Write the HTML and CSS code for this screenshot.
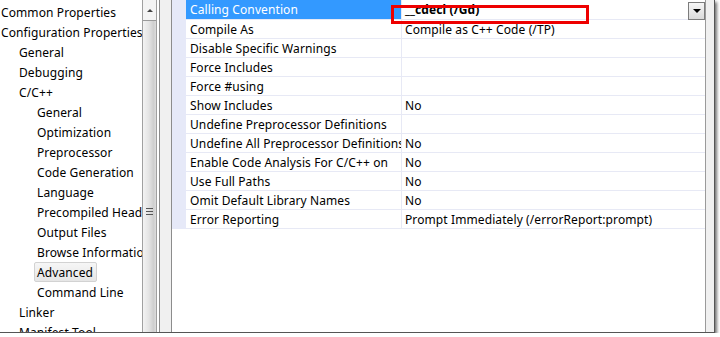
FILE: index.html
```html
<!DOCTYPE html>
<html>
<head>
  <meta charset="UTF-8">
  <title>Property Pages</title>
  <link rel="stylesheet" href="styles.css">
</head>
<body>
  <div class="window">
    <!-- 左侧树 -->
    <ul class="tree">
      <li class="lv0"><span>Common Properties</span></li>
      <li class="lv0"><span>Configuration Properties</span></li>
      <li class="lv1"><span>General</span></li>
      <li class="lv1"><span>Debugging</span></li>
      <li class="lv1"><span>C/C++</span></li>
      <li class="lv2"><span>General</span></li>
      <li class="lv2"><span>Optimization</span></li>
      <li class="lv2"><span>Preprocessor</span></li>
      <li class="lv2"><span>Code Generation</span></li>
      <li class="lv2"><span>Language</span></li>
      <li class="lv2"><span>Precompiled Headers</span></li>
      <li class="lv2"><span>Output Files</span></li>
      <li class="lv2"><span>Browse Information</span></li>
      <li class="lv2 selected"><span>Advanced</span></li>
      <li class="lv2"><span>Command Line</span></li>
      <li class="lv1"><span>Linker</span></li>
      <li class="lv1"><span>Manifest Tool</span></li>
    </ul>
    <div class="vscroll">
      <div class="up"></div>
      <div class="thumb"><span class="grip"></span></div>
    </div>
    <div class="splitter"></div>

    <!-- 属性表格 -->
    <div class="grid">
      <div class="gutter"></div>
      <div class="table">
        <div class="row active">
          <div class="name">Calling Convention</div>
          <div class="value bold">__cdecl (/Gd)<span class="drop"></span></div>
        </div>
        <div class="row"><div class="name">Compile As</div><div class="value">Compile as C++ Code (/TP)</div></div>
        <div class="row"><div class="name">Disable Specific Warnings</div><div class="value"></div></div>
        <div class="row"><div class="name">Force Includes</div><div class="value"></div></div>
        <div class="row"><div class="name">Force #using</div><div class="value"></div></div>
        <div class="row"><div class="name">Show Includes</div><div class="value">No</div></div>
        <div class="row"><div class="name">Undefine Preprocessor Definitions</div><div class="value"></div></div>
        <div class="row"><div class="name">Undefine All Preprocessor Definitions</div><div class="value">No</div></div>
        <div class="row"><div class="name">Enable Code Analysis For C/C++ on</div><div class="value">No</div></div>
        <div class="row"><div class="name">Use Full Paths</div><div class="value">No</div></div>
        <div class="row"><div class="name">Omit Default Library Names</div><div class="value">No</div></div>
        <div class="row"><div class="name">Error Reporting</div><div class="value">Prompt Immediately (/errorReport:prompt)</div></div>
      </div>
    </div>
    <div class="right-pane"></div>
  </div>
  <!-- 红框标注 -->
  <div class="mark"></div>
</body>
</html>
```

FILE: styles.css
```css
body {
  margin: 0;
  background: #fff;
  font-family: "Noto Sans", "Noto Sans CJK SC", sans-serif;
  font-size: 12px;
  letter-spacing: 0.1px;
  color: #000;
}
ul, li {
  margin: 0;
  padding: 0;
  list-style: none;
}
.window {
  width: 714px;
  height: 332px;
  display: flex;
  background: #fff;
  border-right: 1px solid #555;
  border-bottom: 1px solid #555;
  box-shadow: 2px 2px 3px rgba(0, 0, 0, 0.55);
  overflow: hidden;
}

/* tree */
.tree {
  width: 142px;
  flex: none;
  padding-top: 2px;
  overflow: hidden;
  white-space: nowrap;
}
.tree li {
  height: 20px;
  line-height: 19px;
}
.tree span {
  display: inline-block;
  height: 18px;
  padding: 0 3px 0 2px;
  border: 1px solid transparent;
  border-radius: 2px;
}
.lv0 span { margin-left: -2px; }
.lv1 span { margin-left: 16px; }
.lv2 span { margin-left: 34px; }
.tree .selected span {
  background: linear-gradient(#f6f6f6, #e6e6e6);
  border-color: #d2d2d2;
}

.vscroll {
  width: 13px;
  flex: none;
  border-left: 1px solid #a0a0a0;
  border-right: 1px solid #a0a0a0;
  background: #f0f0f0;
  display: flex;
  flex-direction: column;
}
.up {
  height: 20px;
  flex: none;
  display: flex;
  align-items: center;
  justify-content: center;
  background: #f4f4f4;
}
.up::before {
  content: "";
  border-left: 3px solid transparent;
  border-right: 3px solid transparent;
  border-bottom: 3px solid #444;
}
.thumb {
  flex: 1;
  border-top: 1px solid #9a9a9a;
  background: linear-gradient(to right, #f3f3f3, #e4e4e4 45%, #cfcfcf 80%, #dcdcdc);
  display: flex;
  justify-content: center;
  padding-top: 187px;
}
.grip {
  width: 7px;
  height: 7px;
  background: repeating-linear-gradient(#555 0 1px, transparent 1px 3px);
}

.splitter {
  width: 11px;
  flex: none;
  margin-left: 2px;
  background: #f0f0f0;
  border-left: 1px solid #8c8c8c;
  border-right: 1px solid #8c8c8c;
}

/* grid */
.grid {
  width: 533px;
  flex: none;
  display: flex;
  align-items: flex-start;
  border-right: 1px solid #9a9a9a;
}
.gutter {
  width: 14px;
  height: 229px;
  flex: none;
  background: #e6e9f8;
}
.table {
  flex: 1;
  padding-top: 1px;
}
.row {
  display: flex;
  height: 18px;
  border-bottom: 1px solid #e7e9f5;
  line-height: 16px;
}
.name {
  width: 211px;
  flex: none;
  padding: 2px 0 0 4px;
  border-right: 1px solid #e7e9f5;
  overflow: hidden;
  white-space: nowrap;
}
.value {
  flex: 1;
  padding: 2px 0 0 3px;
  display: flex;
  white-space: nowrap;
}
.bold {
  font-weight: bold;
}
.row.active {
  margin-top: -1px;
  height: 19px;
}
.row.active .name {
  background: #3399ff;
  color: #fff;
}
.drop {
  width: 15px;
  height: 16px;
  margin: 0 0 0 auto;
  border: 1px solid #7c7c7c;
  background: linear-gradient(#f6f6f6, #dadada);
  display: flex;
  align-items: center;
  justify-content: center;
}
.drop::before {
  content: "";
  border-left: 4px solid transparent;
  border-right: 4px solid transparent;
  border-top: 4px solid #000;
}
.right-pane {
  flex: 1;
  background: #f0f0f0;
}

.mark {
  position: absolute;
  left: 391px;
  top: 5px;
  width: 192px;
  height: 13px;
  border: 3px solid #ee0000;
}
```
